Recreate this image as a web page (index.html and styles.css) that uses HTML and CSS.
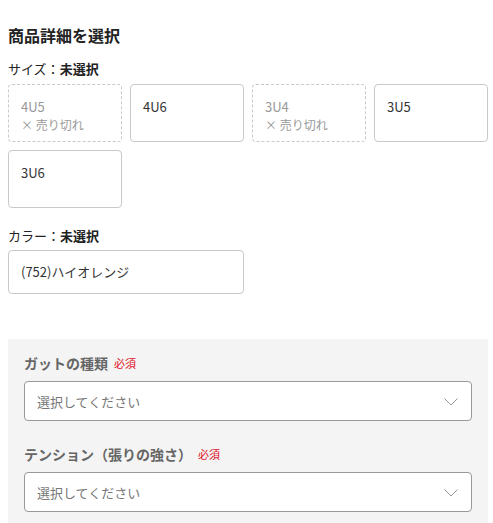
FILE: index.html
```html
<!DOCTYPE html>
<html lang="ja">
<head>
<meta charset="utf-8">
<title>商品詳細を選択</title>
<link rel="stylesheet" href="styles.css">
</head>
<body>
<div class="page">
  <h2 class="title">商品詳細を選択</h2>

  <div class="field-label">サイズ：<b>未選択</b></div>
  <div class="options">
    <div class="opt soldout"><span class="code">4U5</span><span>× 売り切れ</span></div>
    <div class="opt"><span>4U6</span></div>
    <div class="opt soldout"><span class="code">3U4</span><span>× 売り切れ</span></div>
    <div class="opt"><span>3U5</span></div>
    <div class="opt"><span>3U6</span></div>
  </div>

  <div class="field-label color-label">カラー：<b>未選択</b></div>
  <div class="options">
    <div class="opt color">(752)ハイオレンジ</div>
  </div>

  <div class="panel">
    <div class="panel-label">ガットの種類<span class="req">必須</span></div>
    <div class="select">
      <span>選択してください</span>
      <svg class="chev" width="14" height="8" viewBox="0 0 14 8"><polyline points="0.5,0.5 7,7 13.5,0.5" fill="none" stroke="#999" stroke-width="1"/></svg>
    </div>
    <div class="panel-label second">テンション（張りの強さ）<span class="req">必須</span></div>
    <div class="select">
      <span>選択してください</span>
      <svg class="chev" width="14" height="8" viewBox="0 0 14 8"><polyline points="0.5,0.5 7,7 13.5,0.5" fill="none" stroke="#999" stroke-width="1"/></svg>
    </div>
  </div>
</div>
</body>
</html>
```

FILE: styles.css
```css
* { box-sizing: border-box; }
html, body { margin: 0; padding: 0; background: #fff; }
body {
  font-family: "Noto Sans CJK JP", "Noto Sans", sans-serif;
  color: #222;
}
.page { padding: 0 5px 0 8px; }
.title {
  margin: 23px 0 0;
  font-size: 16px;
  line-height: 24px;
  font-weight: 700;
}
.field-label {
  margin-top: 12px;
  font-size: 13px;
  line-height: 20px;
}
.field-label b { font-weight: 700; }
.color-label { margin-top: 18px; }
.options {
  margin-top: 5px;
  display: grid;
  grid-template-columns: repeat(4, 114px);
  gap: 8px;
}
.opt {
  height: 58px;
  border: 1px solid #c9c9c9;
  border-radius: 4px;
  padding: 14px 12px 0;
  font-size: 13px;
  line-height: 16px;
  display: flex;
  flex-direction: column;
  color: #333;
}
.opt.soldout {
  border: 1px dashed #c9c9c9;
  color: #999;
  font-size: 12px;
  line-height: 17.5px;
  padding-top: 13px;
}
.opt.soldout .code { font-size: 13px; }
.opt.color {
  grid-column: span 2;
  height: 44px;
  padding: 11px 12px;
  line-height: 20px;
  margin-top: -1px;
}
.panel {
  margin-top: 45px;
  background: #f4f4f4;
  padding: 14px 16px 16px;
}
.panel-label {
  font-size: 14px;
  line-height: 20px;
  font-weight: 700;
  color: #666;
  display: flex;
  align-items: center;
}
.panel-label.second { margin-top: 23px; }
.req {
  margin-left: 6px;
  font-size: 11px;
  font-weight: 400;
  color: #e0101e;
}
.select {
  margin-top: 8px;
  height: 40px;
  background: #fff;
  border: 1px solid #999;
  border-radius: 4px;
  padding: 0 13px 0 12px;
  display: flex;
  align-items: center;
  justify-content: space-between;
  font-size: 13px;
  color: #777;
}
.chev { display: block; margin-top: 2px; }
```
